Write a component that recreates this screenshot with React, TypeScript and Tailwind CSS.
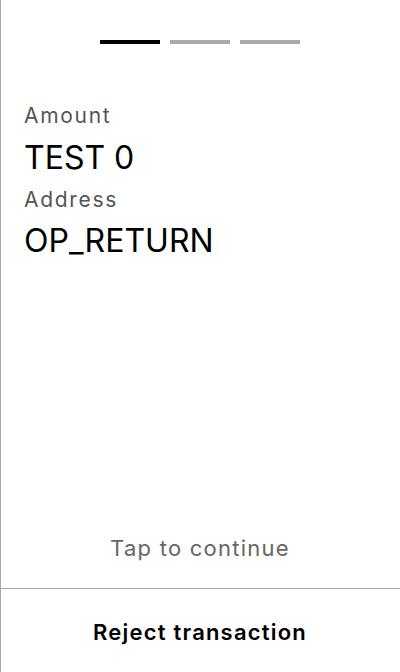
export default function App() {
  const steps = [true, false, false];

  return (
    <div
      className="flex h-[672px] w-[400px] flex-col bg-white text-black shadow-[inset_1px_0_0_#aaaaaa]"
      style={{ fontFamily: 'Inter, "Noto Sans", sans-serif' }}
    >
      <div className="flex justify-center gap-[10px] pt-10">
        {steps.map((active, i) => (
          <span key={i} className={`h-1 w-[60px] ${active ? 'bg-black' : 'bg-[#aaaaaa]'}`} />
        ))}
      </div>

      <div className="flex flex-col px-6 pt-[60px]">
        <span className="text-[21px] leading-6 tracking-[1.7px] text-[#555555]">Amount</span>
        <span className="mt-[11px] text-[32px] leading-[38px]">TEST 0</span>
        <span className="mt-[11px] text-[21px] leading-6 tracking-[1.7px] text-[#555555]">Address</span>
        <span className="mt-[10px] text-[32px] leading-[38px]">OP_RETURN</span>
      </div>

      <div className="flex-1" />

      <div className="pb-[26px] text-center text-[22px] leading-7 tracking-[1.25px] text-[#666666]">
        Tap to continue
      </div>

      <div className="h-[84px] border-t border-[#aaaaaa] pt-[29px] text-center text-[22px] leading-7 font-semibold tracking-[1.2px]">
        Reject transaction
      </div>
    </div>
  );
}
